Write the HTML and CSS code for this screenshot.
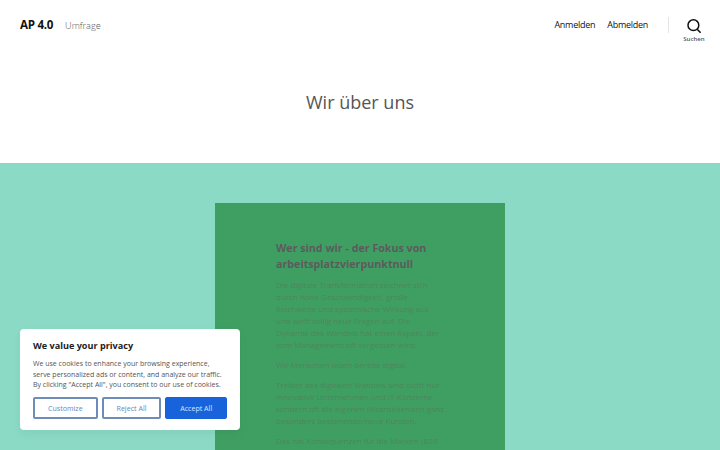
FILE: index.html
```html
<!DOCTYPE html>
<html lang="de">
<head>
<meta charset="utf-8">
<title>AP 4.0</title>
<link rel="stylesheet" href="styles.css">
</head>
<body>
<header class="site-header">
  <div class="branding">
    <span class="site-title">AP 4.0</span>
    <span class="site-desc">Umfrage</span>
  </div>
  <nav class="nav">
    <a class="nav-link">Anmelden</a>
    <a class="nav-link">Abmelden</a>
    <span class="divider"></span>
    <div class="search">
      <svg class="search-icon" viewBox="0 0 16 16" width="16" height="16"><circle cx="7.4" cy="7.2" r="5.4" fill="none" stroke="#111" stroke-width="1.5"/><path d="M11.2 11.2 L14.6 14.8" stroke="#111" stroke-width="1.6" fill="none"/></svg>
      <span class="search-label">Suchen</span>
    </div>
  </nav>
</header>
<section class="page-head"><h1 class="page-title">Wir über uns</h1></section>
<main class="band">
  <article class="card">
    <h2 class="card-title">Wer sind wir - der Fokus von arbeitsplatzvierpunktnull</h2>
    <p class="card-text">Die digitale Transformation zeichnet sich durch hohe Geschwindigkeit, große Reichweite und systemische Wirkung aus und wirft völlig neue Fragen auf. Die Dynamik des Wandels hat einen Aspekt, der vom Management oft vergessen wird:</p>
    <p class="card-text">Wir Menschen leben bereits digital.</p>
    <p class="card-text">Treiber des digitalen Wandels sind nicht nur innovative Unternehmen und IT-Konzerne, sondern oft die eigenen Mitarbeitenden ganz besonders bestehende/neue Kunden.</p>
    <p class="card-text">Das hat Konsequenzen für die Marken (B2B und B2C) und ihre Kommunikation.</p>
  </article>
</main>
<aside class="cookie">
  <h3 class="cookie-title">We value your privacy</h3>
  <p class="cookie-text">We use cookies to enhance your browsing experience, serve personalized ads or content, and analyze our traffic. By clicking "Accept All", you consent to our use of cookies.</p>
  <div class="cookie-actions">
    <button class="btn btn-outline btn-customize">Customize</button>
    <button class="btn btn-outline btn-reject">Reject All</button>
    <button class="btn btn-solid">Accept All</button>
  </div>
</aside>
</body>
</html>
```
FILE: styles.css
```css
* { box-sizing: border-box; }
html, body { margin: 0; height: 450px; overflow: hidden; }
body { font-family: "Open Sans", sans-serif; background: #fff; color: #111; position: relative; }

.site-header { height: 50px; display: flex; justify-content: space-between; align-items: flex-start; padding: 0 14px 0 20px; }
.branding { display: flex; align-items: baseline; padding-top: 15px; gap: 12px; }
.site-title { font-size: 11.6px; font-weight: 700; line-height: 20px; letter-spacing: -0.3px; }
.site-desc { font-size: 9.2px; font-weight: 300; line-height: 20px; color: #555; }
.nav { display: flex; align-items: flex-start; }
.nav-link { font-size: 9px; line-height: 16px; padding-top: 17px; margin-right: 12px; color: #111; letter-spacing: -0.27px; }
.divider { width: 1px; height: 16px; margin: 17px 13px 0 8px; background: #e4e4e4; }
.search { display: flex; flex-direction: column; align-items: center; padding-top: 18px; width: 24px; }
.search-icon { display: block; }
.search-label { font-size: 6.1px; font-weight: 600; line-height: 9px; color: #555; white-space: nowrap; }

.page-head { height: 113px; text-align: center; }
.page-title { margin: 0; padding-top: 39px; font-size: 18px; font-weight: 400; line-height: 26px; color: #555; }

.band { height: 287px; background: #8adac6; padding-top: 40px; display: flex; justify-content: center; overflow: hidden; }
.card { width: 290px; height: 400px; flex: none; background: #3f9f63; padding: 37px 60px 0 61px; }
.card-title { margin: 0 0 7px; font-size: 10.7px; font-weight: 700; line-height: 16px; color: #5c5b5c; }
.card-text { margin: 0 0 8px; font-size: 8px; line-height: 12px; color: #4f855c; }

.cookie { position: absolute; left: 20px; top: 329px; width: 220px; height: 101px; background: #fff; border-radius: 4px; padding: 10px 13px; box-shadow: 0 4px 10px rgba(0,0,0,.05); }
.cookie-title { margin: 0 0 7px; font-size: 9.1px; font-weight: 700; line-height: 13px; color: #212121; }
.cookie-text { margin: 0 0 6px; font-size: 7px; line-height: 10.6px; color: #555; }
.cookie-actions { display: flex; gap: 4px; }
.btn { font-family: inherit; font-size: 7.1px; font-weight: 500; height: 22px; padding: 0; border-radius: 2px; cursor: pointer; }
.btn-outline { background: #fff; border: 2px solid #6d8db8; color: #6488ba; }
.btn-customize { width: 65px; }
.btn-reject { width: 60px; }
.btn-solid { width: 62px; background: #1863dc; border: 1px solid #1863dc; color: #dbe7fb; }
```
